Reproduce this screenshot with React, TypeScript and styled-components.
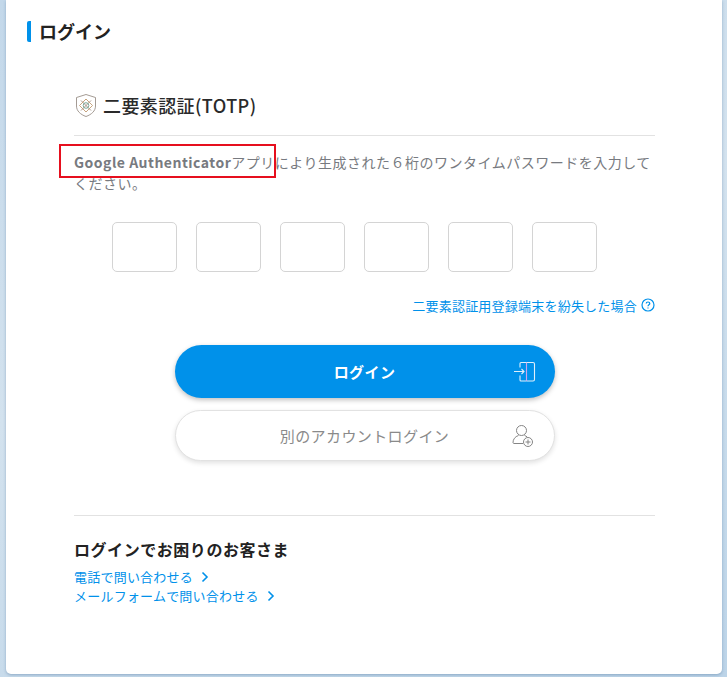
import * as React from 'react';
import styled, { createGlobalStyle } from 'styled-components';

const GlobalStyle = createGlobalStyle`
  html, body {
    margin: 0;
    padding: 0;
    height: 677px;
    overflow: hidden;
  }
  body {
    background: linear-gradient(160deg, #c3d8ea 0%, #d3e2ee 45%, #bcd4e8 100%);
    font-family: "Noto Sans CJK JP", "Noto Sans", sans-serif;
    color: #222;
  }
`;

const Card = styled.main`
  box-sizing: border-box;
  width: 716px;
  height: 674px;
  margin-left: 6px;
  background: #fff;
  border-radius: 0 0 5px 5px;
  box-shadow: 0 1px 3px rgba(70, 110, 150, 0.45);
  padding-top: 21px;
`;

const PageTitle = styled.h1`
  margin: 0 0 0 21px;
  padding-left: 8px;
  height: 21px;
  border-left: 4px solid #0091ea;
  border-radius: 2px;
  font-size: 18px;
  font-weight: 700;
  line-height: 21px;
  color: #222;
`;

const Body = styled.div`
  width: 581px;
  margin: 42px 0 0 68px;
`;

const HeadingRow = styled.div`
  display: flex;
  align-items: center;
  gap: 6px;
  height: 52px;
  padding: 0 0 9px 1px;
  box-sizing: border-box;
  border-bottom: 1px solid #e2e2e2;
`;

const Heading = styled.h2`
  margin: 0;
  font-size: 18px;
  font-weight: 500;
  letter-spacing: 0.4px;
  color: #2a2a2a;
`;

const Lead = styled.p`
  position: relative;
  margin: 16px 0 0;
  font-size: 14px;
  line-height: 21px;
  letter-spacing: 0.5px;
  color: #777a80;

  b {
    font-weight: 700;
    color: #777a80;
  }
`;

const Highlight = styled.span`
  position: absolute;
  left: -15px;
  top: -8px;
  width: 217px;
  height: 34px;
  box-sizing: border-box;
  border: 2px solid #e60f1e;
`;

const CodeRow = styled.div`
  display: flex;
  justify-content: center;
  gap: 19px;
  margin-top: 28px;
  padding-right: 20px;
`;

const CodeInput = styled.input`
  box-sizing: border-box;
  width: 65px;
  height: 50px;
  border: 1px solid #d4d4d4;
  border-radius: 5px;
  background: #fff;
`;

const LostRow = styled.div`
  display: flex;
  justify-content: flex-end;
  align-items: center;
  gap: 4px;
  margin-top: 22px;
  height: 22px;
`;

const BlueLink = styled.a`
  font-size: 13px;
  line-height: 19px;
  letter-spacing: 0.22px;
  color: #0091ea;
  display: flex;
  align-items: center;
`;

const ButtonStack = styled.div`
  display: flex;
  flex-direction: column;
  align-items: center;
  gap: 12px;
  margin-top: 29px;
`;

const PillButton = styled.button<{ $primary?: boolean }>`
  position: relative;
  box-sizing: border-box;
  width: 380px;
  height: ${(p) => (p.$primary ? '53px' : '51px')};
  border-radius: 27px;
  border: ${(p) => (p.$primary ? 'none' : '1px solid #e2e2e2')};
  background: ${(p) => (p.$primary ? '#0091ea' : '#fff')};
  color: ${(p) => (p.$primary ? '#fff' : '#8a8a8a')};
  font-family: inherit;
  font-size: 15px;
  font-weight: ${(p) => (p.$primary ? 700 : 400)};
  letter-spacing: 0.4px;
  box-shadow: 0 2px 5px rgba(0, 0, 0, ${(p) => (p.$primary ? 0.25 : 0.12)});

  svg {
    position: absolute;
    right: 18px;
    top: 50%;
    transform: translateY(-50%);
  }
`;

const Divider = styled.hr`
  margin: 54px 0 0;
  border: none;
  border-top: 1px solid #e2e2e2;
`;

const HelpTitle = styled.h3`
  margin: 21px 0 0;
  font-size: 16px;
  line-height: 24px;
  font-weight: 700;
  letter-spacing: 0.55px;
  color: #222;
`;

const HelpLinks = styled.div`
  display: flex;
  flex-direction: column;
  margin-top: 6px;
`;

const ChevronMark = styled.svg`
  margin-left: 7px;
`;

const Chevron = () => (
  <ChevronMark width="10" height="12" viewBox="0 0 10 12" fill="none" stroke="#0091ea" strokeWidth="1.6">
    <path d="M2.5 1.5 7 6l-4.5 4.5" />
  </ChevronMark>
);

const ShieldIcon = () => (
  <svg width="22" height="25" viewBox="0 0 22 25" fill="none" strokeWidth="0.9">
    <path d="M11 1.5 20.5 4.5V13c0 5-4 8.500-9.500 10.500C5.500 21.500 1.500 18 1.500 13V4.500Z" stroke="#9a9088" />
    <path d="M6 7.500 16 17.500M16 7.500 6 17.500" stroke="#a08a7c" />
    <circle cx="11" cy="12.500" r="2.800" stroke="#6fa08f" />
    <path d="M11 6 17.500 12.500 11 19 4.500 12.500Z" stroke="#c09a70" />
  </svg>
);

const HelpIcon = () => (
  <svg width="14" height="14" viewBox="0 0 14 14" fill="none" stroke="#0091ea" strokeWidth="1.2">
    <circle cx="7" cy="7" r="6" />
    <path d="M5.200 5.600C5.200 4.500 6 4 7 4s1.800.6 1.800 1.500C8.800 6.800 7 6.800 7 8.200" />
    <path d="M7 9.500v1" />
  </svg>
);

const DoorIcon = () => (
  <svg width="24" height="22" viewBox="0 0 24 22" fill="none" stroke="#dfeffb" strokeWidth="1.100">
    <path d="M1 10.500h10M8.500 8 11 10.500 8.500 13" />
    <path d="M7 6.500V2.500a1 1 0 0 1 1-1h6M7 14.500V19a1 1 0 0 0 1 1h5.500" />
    <path d="M13.500 1.500h6.500a1.500 1.500 0 0 1 1.500 1.500v15.500a1.500 1.500 0 0 1-1.500 1.500h-6.500" />
    <path d="M13.500 1.500v18.500" stroke="#c9a6f0" />
  </svg>
);

const UserAddIcon = () => (
  <svg width="24" height="24" viewBox="0 0 24 24" fill="none" stroke="#858585" strokeWidth="1">
    <circle cx="9.500" cy="6.500" r="5" />
    <path d="M6.500 11.500C3 12.500 1 15.500 1 18.500c0 .6.500 1 1 1h9M12.500 11.500c1 .3 2 .8 2.700 1.500" />
    <circle cx="16" cy="18" r="4.500" />
    <path d="M16 15.500v5M13.500 18h5" />
  </svg>
);

const codeSlots = [0, 1, 2, 3, 4, 5];

const App: React.FC = () => {
  return (
    <>
      <GlobalStyle />
      <Card>
        <PageTitle>ログイン</PageTitle>
        <Body>
          <HeadingRow>
            <ShieldIcon />
            <Heading>二要素認証(TOTP)</Heading>
          </HeadingRow>
          <Lead>
            <Highlight />
            <b>Google Authenticator</b>アプリにより生成された６桁のワンタイムパスワードを入力してください。
          </Lead>
          <CodeRow>
            {codeSlots.map((n) => (
              <CodeInput key={n} />
            ))}
          </CodeRow>
          <LostRow>
            <BlueLink>二要素認証用登録端末を紛失した場合</BlueLink>
            <HelpIcon />
          </LostRow>
          <ButtonStack>
            <PillButton $primary>
              ログイン
              <DoorIcon />
            </PillButton>
            <PillButton>
              別のアカウントログイン
              <UserAddIcon />
            </PillButton>
          </ButtonStack>
          <Divider />
          <HelpTitle>ログインでお困りのお客さま</HelpTitle>
          <HelpLinks>
            <BlueLink>電話で問い合わせる<Chevron /></BlueLink>
            <BlueLink>メールフォームで問い合わせる<Chevron /></BlueLink>
          </HelpLinks>
        </Body>
      </Card>
    </>
  );
};

export default App;
